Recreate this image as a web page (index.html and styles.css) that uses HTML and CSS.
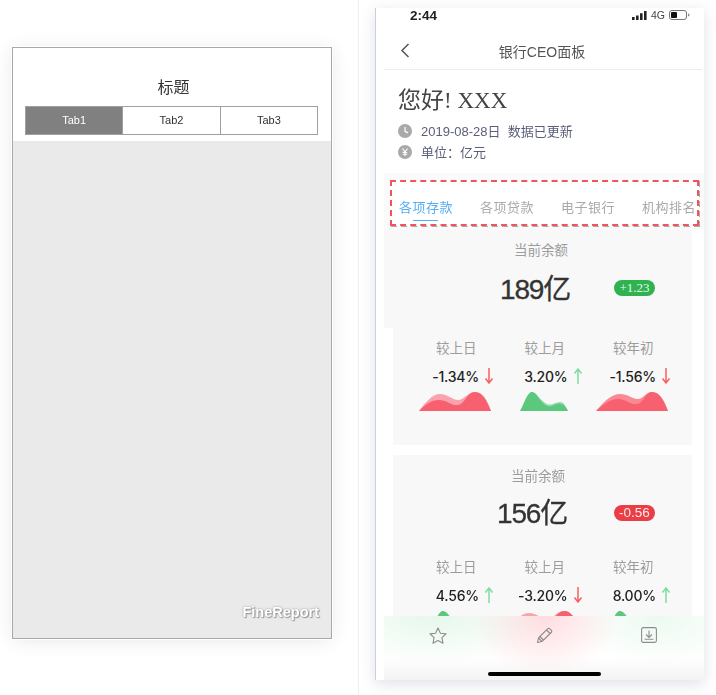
FILE: index.html
```html
<!doctype html>
<html lang="en">
  <head>
    <meta charset="utf-8" />
    <meta name="viewport" content="width=device-width, initial-scale=1" />
    <title>银行CEO面板</title>
    <link rel="stylesheet" href="styles.css">
  </head>
  <body>
    <svg class="defs" width="0" height="0">
      <symbol id="down" viewBox="0 0 10 16"><path d="M5 0v14.500M1.500 10.500 5 15l3.500-4.500" fill="none" stroke="#f8605f" stroke-width="1.500"/></symbol>
      <symbol id="up" viewBox="0 0 10 16"><path d="M5 16V1.500M1.500 5.500 5 1l3.500 4.500" fill="none" stroke="#7fdca0" stroke-width="1.500"/></symbol>
      <symbol id="red-a" viewBox="0 0 72 20">
        <path d="M0 20C7 11 13 3 21 3c8 0 12 6 18 6 6 0 10-8 17-8 8 0 12 9 16 19z" fill="#f9a3ad"/>
        <path d="M0 20C7 13 12 9 20 9c8 0 12 6 19 5 7-1 9-13 17-13 8 0 12 9 16 19z" fill="#f7616f"/>
      </symbol>
      <symbol id="red-b" viewBox="0 0 72 20">
        <path d="M0 20C8 10 16 3 24 3c8 0 12 5 18 5 5 0 8-7 14-7 8 0 12 9 16 19z" fill="#f98a95"/>
        <path d="M0 20C8 13 14 8 22 8c8 0 12 6 19 5 7-1 8-12 15-12 8 0 12 9 16 19z" fill="#f7616f"/>
      </symbol>
      <symbol id="green" viewBox="0 0 48 20">
        <path d="M0 20C4 14 7 1 12 1c5 0 8 9 15 12 5 2 8-2 13-2 4 0 6 5 8 9z" fill="#8fdcab"/>
        <path d="M0 20C4 14 7 1 12 1c5 0 8 11 15 14 5 2 8-3 13-2 4 0 6 3 8 7z" fill="#5bc87e"/>
      </symbol>
    </svg>

    <div class="page">
      <div class="left">
        <div class="wire">
          <div class="wire-head">
            <div class="wire-title">标题</div>
            <div class="wire-tabs">
              <div class="wire-tab on">Tab1</div>
              <div class="wire-tab">Tab2</div>
              <div class="wire-tab">Tab3</div>
            </div>
          </div>
          <div class="wire-body"><span class="brand">FineReport</span></div>
        </div>
      </div>

      <div class="phone">
        <div class="status">
          <span class="time">2:44</span>
          <span class="status-right">
            <svg width="15" height="9" viewBox="0 0 15 9"><path d="M0 6h2.600v3H0zM4 4.500h2.600V9H4zM8 2.200h2.600V9H8zM12 0h2.600v9H12z" fill="#222"/></svg>
            <span class="net">4G</span>
            <svg width="21" height="10" viewBox="0 0 21 10"><rect x=".5" y=".5" width="17" height="9" rx="2.500" fill="none" stroke="#777"/><rect x="2" y="2" width="6" height="6" rx="1" fill="#111"/><path d="M19 3.500c1 .3 1.500 1 1.500 1.500s-.5 1.200-1.500 1.500z" fill="#888"/></svg>
          </span>
        </div>
        <div class="nav">
          <svg class="back" width="10" height="15" viewBox="0 0 10 15"><path d="M8.500 1 2 7.500 8.500 14" fill="none" stroke="#555" stroke-width="1.500"/></svg>
          <div class="nav-title">银行CEO面板</div>
        </div>
        <div class="hello">
          <h1>您好! XXX</h1>
          <div class="meta">
            <svg width="14" height="14" viewBox="0 0 14 14"><circle cx="7" cy="7" r="7" fill="#a9a9a9"/><path d="M7 3v4.300l3 1.600" fill="none" stroke="#fff" stroke-width="1.200"/></svg>
            <span>2019-08-28日&nbsp;&nbsp;数据已更新</span>
          </div>
          <div class="meta">
            <svg width="14" height="14" viewBox="0 0 14 14"><circle cx="7" cy="7" r="7" fill="#a9a9a9"/><path d="M4.500 3.500 7 7l2.500-3.500M7 7v4M4.800 7.500h4.400M4.800 9.200h4.400" fill="none" stroke="#fff" stroke-width="1.100"/></svg>
            <span>单位：亿元</span>
          </div>
        </div>

        <div class="scroll">
          <div class="tabs">
            <div class="tabs-row">
              <span class="tab on">各项存款</span>
              <span class="tab">各项贷款</span>
              <span class="tab">电子银行</span>
              <span class="tab">机构排名</span>
            </div>
          </div>

          <div class="balance">
            <div class="label">当前余额</div>
            <div class="amount-row">
              <span class="amount">189亿</span>
              <span class="badge good">+1.23</span>
            </div>
          </div>
          <div class="card first">
            <div class="metrics">
              <div class="metric">
                <div class="metric-label">较上日</div>
                <div class="metric-val">-1.34%<svg class="arrow"><use href="#down"/></svg></div>
                <svg class="spark wide"><use href="#red-a"/></svg>
              </div>
              <div class="metric">
                <div class="metric-label">较上月</div>
                <div class="metric-val">3.20%<svg class="arrow"><use href="#up"/></svg></div>
                <svg class="spark narrow"><use href="#green"/></svg>
              </div>
              <div class="metric">
                <div class="metric-label">较年初</div>
                <div class="metric-val">-1.56%<svg class="arrow"><use href="#down"/></svg></div>
                <svg class="spark wide"><use href="#red-b"/></svg>
              </div>
            </div>
          </div>

          <div class="card second">
            <div class="label shifted">当前余额</div>
            <div class="amount-row second-row">
              <span class="amount">156亿</span>
              <span class="badge bad">-0.56</span>
            </div>
            <div class="metrics">
              <div class="metric">
                <div class="metric-label">较上日</div>
                <div class="metric-val">4.56%<svg class="arrow"><use href="#up"/></svg></div>
                <svg class="spark narrow"><use href="#green"/></svg>
              </div>
              <div class="metric">
                <div class="metric-label">较上月</div>
                <div class="metric-val">-3.20%<svg class="arrow"><use href="#down"/></svg></div>
                <svg class="spark wide"><use href="#red-a"/></svg>
              </div>
              <div class="metric">
                <div class="metric-label">较年初</div>
                <div class="metric-val">8.00%<svg class="arrow"><use href="#up"/></svg></div>
                <svg class="spark narrow"><use href="#green"/></svg>
              </div>
            </div>
          </div>
        </div>

        <div class="bottom">
          <div class="bottom-icons">
            <svg width="18" height="17" viewBox="0 0 18 17"><path d="M9 1l2.400 5.200 5.600.7-4.100 3.800 1.100 5.600L9 13.500l-5 2.800 1.100-5.600L1 6.900l5.600-.7z" fill="none" stroke="#8d8d8d" stroke-width="1.100" stroke-linejoin="round"/></svg>
            <svg width="17" height="17" viewBox="0 0 17 17"><path d="M1.500 15.500l1-4.500L11.500 1.800c.7-.7 1.600-.7 2.300 0l1.400 1.400c.7.700.7 1.600 0 2.300L6 14.500zM2.500 11 6 14.500M4 9.500l3.500 3.500M10.500 3l3.500 3.500" fill="none" stroke="#8d8d8d" stroke-width="1.100" stroke-linejoin="round"/></svg>
            <svg width="16" height="16" viewBox="0 0 16 16"><rect x=".6" y=".6" width="14.800" height="14.800" rx="1.600" fill="none" stroke="#8d8d8d" stroke-width="1.100"/><path d="M8 3.500v6.500M5 7.500 8 10.500l3-3M3.500 12.300h9" fill="none" stroke="#8d8d8d" stroke-width="1.100"/></svg>
          </div>
          <div class="home"></div>
        </div>
      </div>
    </div>
  </body>
</html>
```

FILE: styles.css
```css
:root { --cjk: "Noto Sans CJK SC"; --muted:#9c9c9c; --ink:#2b2b2b; --panel:#f8f8f8; }
*{ box-sizing:border-box; }
body{ margin:0; background:#fff; font-family: "Liberation Sans", var(--cjk), sans-serif; color:var(--ink); overflow:hidden; }
.defs{ display:block; height:0; }
.page{ display:flex; width:716px; height:695px; }

/* left wireframe */
.left{ width:359px; height:695px; padding:47px 0 0 12px; border-right:1px solid #eee; }
.wire{ width:320px; height:592px; border:1px solid #a8a8a8; background:#fff; display:flex; flex-direction:column; box-shadow:0 0 0 1px #fff, 0 2px 18px rgba(0,0,0,.09); filter:blur(.3px); }
.wire-head{ height:93px; padding:29px 13px 0 12px; }
.wire-title{ text-align:center; font-size:16px; line-height:22px; color:#333; padding-left:4px; }
.wire-tabs{ display:flex; height:29px; margin-top:7px; border:1px solid #a0a0a0; }
.wire-tab{ flex:1; display:flex; align-items:center; justify-content:center; font-size:11px; color:#333; border-left:1px solid #a0a0a0; padding-bottom:2px; }
.wire-tab.on{ background:#808080; color:#fff; border-left:0; }
.wire-body{ flex:1; background:#eaeaea; display:flex; align-items:flex-end; justify-content:flex-end; padding:0 12px 18px 0; }
.brand{ font-size:14.500px; font-weight:700; color:#fff; text-shadow:0 0 2px #8a8a8a, 1px 1px 1px #999; }

/* phone */
.phone{ width:329px; height:672px; margin:8px 0 0 16px; background:#fff; display:flex; flex-direction:column; border-left:1px solid #c9cfe0; box-shadow:0 4px 14px rgba(60,70,110,.16); filter:blur(.4px); }
.status{ height:14px; display:flex; align-items:center; justify-content:space-between; padding:0 14px 0 34px; }
.time{ font-size:13.500px; font-weight:700; color:#222; }
.status-right{ display:flex; align-items:center; gap:4px; }
.net{ font-size:10.500px; color:#444; }
.nav{ height:48px; margin-left:8px; margin-right:2px; border-bottom:1px solid #ececec; display:flex; align-items:center; padding:10px 0 0 16px; }
.back{ flex:none; }
.nav-title{ flex:1; text-align:center; font-size:14px; color:#555; padding-right:28px; }
.hello{ height:103px; padding:17px 0 0 22px; }
h1{ margin:0 0 5px; font:400 23px/28px "Liberation Serif", var(--cjk), serif; color:#444; }
.meta{ display:flex; align-items:center; gap:9px; height:21px; font-size:13px; color:#5b5e78; }
.scroll{ flex:1; min-height:0; overflow:hidden; background:#fff; }
.tabs{ margin-left:8px; height:57px; padding:7px 5px 0 6px; background:#fafafa; }
.tabs-row{ height:46px; display:flex; gap:27px; align-items:center; position:relative; border:2px dashed #f0555f; background:#fff; padding:6px 0 0 7px; white-space:nowrap; }
.tabs-row::after{ content:""; position:absolute; left:-1px; top:-1px; right:-3px; bottom:-3px; border:2px dashed #aaa; z-index:-1; }
.tabs{ position:relative; z-index:0; }
.tab{ flex:none; font-size:13px; letter-spacing:.5px; color:#aaa; position:relative; }
.tab.on{ color:#55aef5; }
.tab.on::after{ content:""; position:absolute; left:14px; width:25px; bottom:-5px; height:1px; background:#55aef5; }
.balance{ margin-left:8px; width:308px; height:98px; background:var(--panel); padding-top:11px; }
.label{ text-align:center; font-size:13.500px; line-height:20px; color:var(--muted); padding-left:6px; }
.label.shifted{ padding:0 9px 0 0; }
.amount-row{ display:flex; align-items:center; justify-content:flex-end; margin-top:7px; padding-right:37px; height:40px; }
.amount{ font-size:28px; letter-spacing:-1.200px; margin:0 44px 2px 0; color:#333; -webkit-text-stroke:.3px #333; }
.badge{ width:41px; height:16px; border-radius:8px; color:#e8f6ec; text-align:center; font:13px/16px "Liberation Serif", serif; }
.badge.good{ background:#2fb350; }
.badge.bad{ background:#ea3d46; font:13.500px/16px "Liberation Sans", sans-serif; color:#ffe9ea; }
.card{ margin-left:17px; width:299px; background:var(--panel); }
.first{ height:117px; padding-top:11px; }
.second{ height:175px; margin-top:10px; padding-top:12px; }
.second-row{ margin-top:6px; padding-right:37px; }
.second-row .amount{ margin:0 47px 4px 0; }
.metrics{ display:grid; grid-template-columns:88.500px 88.500px 88.500px; padding-left:19px; }
.second .metrics{ margin-top:25px; }
.metric-label{ text-align:center; font-size:13.500px; line-height:20px; color:var(--muted); }
.metric-val{ display:flex; align-items:center; justify-content:flex-end; gap:5px; padding-right:6.500px; margin-top:7px; height:20px; font:500 14px "Inter", sans-serif; letter-spacing:-.2px; color:#222; }
.arrow{ width:10px; height:16px; flex:none; }
.spark{ display:block; height:20px; margin-top:5px; }
.spark.wide{ width:72px; margin-left:calc(50% - 37px); }
.spark.narrow{ width:48px; margin-left:calc(50% - 25px); }

.bottom{ height:64px; flex:none; margin-left:8px; background:radial-gradient(ellipse 110px 50px at 50px 0, rgba(205,240,215,.5), transparent), radial-gradient(ellipse 75px 60px at 160px 0, rgba(255,205,210,.7), transparent), radial-gradient(ellipse 90px 50px at 275px 0, rgba(215,245,225,.5), transparent), linear-gradient(#fff 65%, #f3f3f3); display:flex; flex-direction:column; align-items:center; }
.bottom-icons{ width:100%; display:flex; justify-content:space-between; align-items:center; padding:0 47px 0 45px; height:38px; }
.home{ width:113px; height:4px; margin-top:18px; border-radius:2px; background:#000; }
```
